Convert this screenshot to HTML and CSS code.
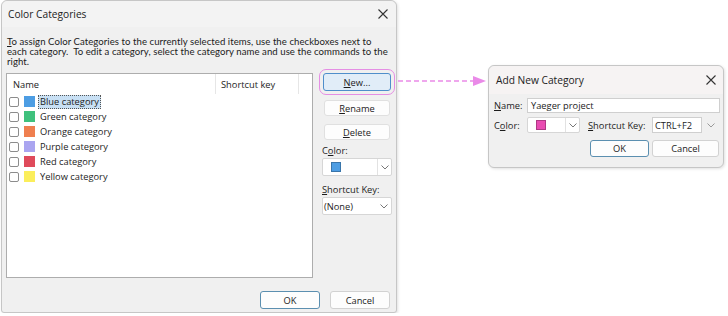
FILE: index.html
```html
<!DOCTYPE html>
<html lang="en">
<head>
    <meta charset="UTF-8">
    <title>Color Categories</title>
    <link rel="stylesheet" href="styles.css">
</head>
<body>
    <div class="page">
        <!-- main dialog -->
        <div class="dialog main-dialog">
            <div class="titlebar">
                <span class="title">Color Categories</span>
                <svg class="close" width="10" height="10" viewBox="0 0 10 10"><path d="M0.5 0.5 L9.5 9.5 M9.5 0.5 L0.5 9.5" stroke="#333" stroke-width="1.1" fill="none"/></svg>
            </div>
            <div class="intro">
                <span class="intro-line"><u>T</u>o assign Color Categories to the currently selected items, use the checkboxes next to</span>
                <span class="intro-line">each category.&nbsp; To edit a category, select the category name and use the commands to the</span>
                <span class="intro-line">right.</span>
            </div>
            <div class="main">
                <div class="listbox">
                    <div class="list-head">
                        <span class="col col-name">Name</span>
                        <span class="col col-key">Shortcut key</span>
                        <span class="col col-rest"></span>
                    </div>
                    <div class="row"><span class="check"></span><span class="swatch blue"></span><span class="label selected">Blue category</span></div>
                    <div class="row"><span class="check"></span><span class="swatch green"></span><span class="label">Green category</span></div>
                    <div class="row"><span class="check"></span><span class="swatch orange"></span><span class="label">Orange category</span></div>
                    <div class="row"><span class="check"></span><span class="swatch purple"></span><span class="label">Purple category</span></div>
                    <div class="row"><span class="check"></span><span class="swatch red"></span><span class="label">Red category</span></div>
                    <div class="row"><span class="check"></span><span class="swatch yellow"></span><span class="label">Yellow category</span></div>
                </div>
                <div class="side">
                    <button class="btn btn-new"><u>N</u>ew...</button>
                    <button class="btn btn-side"><u>R</u>ename</button>
                    <button class="btn btn-side"><u>D</u>elete</button>
                    <div class="field-label">C<u>o</u>lor:</div>
                    <div class="combo">
                        <span class="combo-value"><span class="mini-swatch blue"></span></span>
                        <span class="combo-arrow"><svg width="8" height="5" viewBox="0 0 8 5"><path d="M0.5 0.5 L4 4 L7.5 0.5" stroke="#777" fill="none"/></svg></span>
                    </div>
                    <div class="field-label"><u>S</u>hortcut Key:</div>
                    <div class="combo combo-plain">
                        <span class="combo-value">(None)</span>
                        <span class="combo-arrow"><svg width="8" height="5" viewBox="0 0 8 5"><path d="M0.5 0.5 L4 4 L7.5 0.5" stroke="#777" fill="none"/></svg></span>
                    </div>
                </div>
            </div>
            <div class="footer">
                <button class="btn btn-default">OK</button>
                <button class="btn">Cancel</button>
            </div>
        </div>

        <!-- dashed arrow -->
        <svg class="arrow" width="90" height="12" viewBox="0 0 90 12">
            <path d="M1 6 H78" stroke="#ea8ae8" stroke-width="1.6" stroke-dasharray="5 3" fill="none"/>
            <path d="M76 1 L89 6 L76 11 Z" fill="#ea8ae8"/>
        </svg>

        <!-- add new category dialog -->
        <div class="dialog add-dialog">
            <div class="titlebar">
                <span class="title">Add New Category</span>
                <svg class="close" width="10" height="10" viewBox="0 0 10 10"><path d="M0.5 0.5 L9.5 9.5 M9.5 0.5 L0.5 9.5" stroke="#333" stroke-width="1.1" fill="none"/></svg>
            </div>
            <div class="add-body">
                <div class="add-row">
                    <span class="add-label"><u>N</u>ame:</span>
                    <div class="text-input">Yaeger project</div>
                </div>
                <div class="add-row">
                    <span class="add-label">C<u>o</u>lor:</span>
                    <div class="combo combo-small">
                        <span class="combo-value"><span class="mini-swatch pink"></span></span>
                        <span class="combo-arrow"><svg width="8" height="5" viewBox="0 0 8 5"><path d="M0.5 0.5 L4 4 L7.5 0.5" stroke="#777" fill="none"/></svg></span>
                    </div>
                    <span class="key-label"><u>S</u>hortcut Key:</span>
                    <div class="combo combo-key">
                        <span class="combo-value">CTRL+F2</span>
                        <span class="combo-arrow"><svg width="8" height="5" viewBox="0 0 8 5"><path d="M0.5 0.5 L4 4 L7.5 0.5" stroke="#999" fill="none"/></svg></span>
                    </div>
                </div>
                <div class="add-buttons">
                    <button class="btn btn-default">OK</button>
                    <button class="btn">Cancel</button>
                </div>
            </div>
        </div>
    </div>
</body>
</html>
```

FILE: styles.css
```css
* {
    margin: 0;
    padding: 0;
    box-sizing: border-box;
}

body {
    background-color: #ffffff;
    font-family: "Open Sans", "Noto Sans", sans-serif;
    color: #1c1c1c;
}

.page {
    display: flex;
    align-items: flex-start;
    font-size: 9.3px;
}

u {
    text-decoration: underline;
    text-underline-offset: 1px;
}

/* dialogs */
.dialog {
    background-color: #f0f0f0;
    border: 1px solid #c6c6c6;
    border-radius: 6px 6px 3px 3px;
    box-shadow: 1px 1px 3px rgba(0, 0, 0, 0.12);
}

.main-dialog {
    width: 396px;
    height: 313px;
    margin-left: 1px;
    display: flex;
    flex-direction: column;
}

.titlebar {
    height: 26px;
    display: flex;
    align-items: center;
    justify-content: space-between;
    padding: 0 8px 0 6px;
    background-color: #f3f3f3;
    border-radius: 6px 6px 0 0;
}

.title {
    font-size: 10.2px;
    color: #222;
}

.intro {
    margin: 10px 0 0 5px;
    font-family: "Lato", "Open Sans", sans-serif;
    font-size: 9.6px;
    letter-spacing: 0.05px;
    white-space: nowrap;
}

.intro-line {
    display: block;
    height: 9.8px;
    line-height: 9.8px;
}

.main {
    display: flex;
    margin-top: 7px;
    padding-left: 4px;
}

/* category list */
.listbox {
    width: 307px;
    height: 205px;
    background-color: #fff;
    border: 1px solid #adadad;
}

.list-head {
    display: flex;
    height: 20px;
}

.col {
    display: flex;
    align-items: center;
    padding-left: 6px;
    border-right: 1px solid #e6e6e6;
}

.col-name {
    width: 209px;
}

.col-key {
    width: 83px;
    padding-left: 5px;
}

.col-rest {
    border-right: none;
}

.row {
    display: flex;
    align-items: center;
    height: 15px;
    padding-left: 2px;
}

.check {
    width: 10px;
    height: 10px;
    border: 1px solid #8c8c8c;
    border-radius: 2px;
    background-color: #fff;
}

.swatch {
    width: 11px;
    height: 11px;
    margin-left: 5px;
}

.label {
    margin-left: 3px;
    padding: 0 1px;
    border: 1px solid transparent;
    line-height: 12px;
}

.label.selected {
    background-color: #c8e0f4;
    border: 1px dotted #555;
}

.blue { background-color: #4d9de3; }
.green { background-color: #3fc17d; }
.orange { background-color: #ef7f4f; }
.purple { background-color: #aaa5f0; }
.red { background-color: #df4a5b; }
.yellow { background-color: #fbee5b; }
.pink { background-color: #e94cb2; }

/* buttons */
.btn {
    font-family: inherit;
    font-size: 9.3px;
    color: #1c1c1c;
    background-color: #fdfdfd;
    border: 1px solid #d2d2d2;
    border-radius: 3px;
    height: 18px;
    width: 60px;
}

.btn-default {
    border-color: #5b8fb0;
}

.side {
    display: flex;
    flex-direction: column;
    margin-left: 9px;
    width: 70px;
}

.btn-new {
    width: 68px;
    margin-left: 1px;
    background-color: #e1edf8;
    border-color: #4f8ecb;
    outline: 1.5px solid #e58ee4;
    outline-offset: 3px;
}

.btn-side {
    width: 66px;
    height: 16px;
    margin-left: 2px;
    margin-top: 9px;
    border-color: #e0e0e0;
}

.btn-side + .btn-side {
    margin-top: 8px;
}

.field-label {
    margin-top: 5px;
    height: 12px;
    line-height: 12px;
}

.combo {
    display: flex;
    height: 18px;
    background-color: #fff;
    border: 1px solid #d6d6d6;
    border-radius: 2px;
    margin-top: 1px;
    margin-bottom: 3px;
}

.combo-value {
    flex: 1;
    display: flex;
    align-items: center;
    padding-left: 8px;
}

.combo-plain .combo-value {
    padding-left: 1px;
}

.combo-arrow {
    width: 14px;
    display: flex;
    align-items: center;
    justify-content: center;
    border-left: 1px solid #e2e2e2;
}

.combo-plain .combo-arrow {
    border-left: none;
}

.mini-swatch {
    width: 10px;
    height: 10px;
    border: 1px solid rgba(0, 0, 0, 0.25);
}

.footer {
    margin-top: auto;
    display: flex;
    justify-content: flex-end;
    gap: 10px;
    padding: 0 6px 3px 0;
}

/* arrow */
.arrow {
    margin-top: 75px;
}

/* add new category */
.add-dialog {
    width: 236px;
    height: 103px;
    margin-top: 65px;
    margin-left: 1px;
    border-radius: 6px;
}

.add-dialog .titlebar {
    height: 28px;
    background-color: #f6f3f3;
    padding: 0 7px 0 7px;
}

.add-body {
    padding: 3px 3px 0 5px;
}

.add-row {
    display: flex;
    align-items: center;
    height: 16px;
    margin-bottom: 4px;
}

.add-label {
    width: 33px;
}

.text-input {
    flex: 1;
    height: 15px;
    background-color: #fff;
    border: 1px solid #cfcfcf;
    padding-left: 3px;
    display: flex;
    align-items: center;
}

.combo-small {
    width: 53px;
    height: 16px;
    margin: 0;
}

.combo-small .combo-arrow {
    width: 14px;
}

.key-label {
    margin-left: 8px;
    width: 64px;
}

.combo-key {
    width: 68px;
    height: 16px;
    margin: 0;
    border: none;
    background-color: transparent;
}

.combo-key .combo-value {
    padding-left: 2px;
    background-color: #fff;
    border: 1px solid #cfcfcf;
}

.combo-key .combo-arrow {
    width: 18px;
    border-left: none;
}

.add-buttons {
    display: flex;
    justify-content: flex-end;
    gap: 3px;
    margin-top: 7px;
    padding-right: 1px;
}

.add-buttons .btn {
    height: 17px;
    width: 59px;
}

.add-buttons .btn + .btn {
    width: 67px;
}
```
